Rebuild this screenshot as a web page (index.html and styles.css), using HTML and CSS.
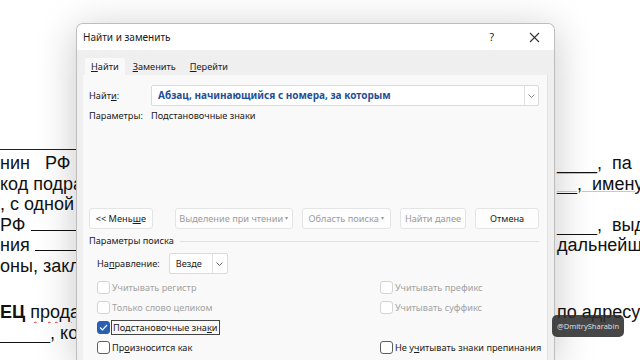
FILE: index.html
```html
<!DOCTYPE html>
<html lang="ru">
<head>
  <meta charset="UTF-8" />
  <title>Найти и заменить</title>
  <link rel="stylesheet" href="styles.css">
</head>
<body>
  <!-- Документ на заднем плане -->
  <div class="doc">
    <div class="doc-rule"></div>
    <div class="doc-line"><span class="l wide">нин РФ</span><span class="r">____,&nbsp; па</span></div>
    <div class="doc-line"><span class="l">код подразделения</span><span class="r link">__,&nbsp; имену</span></div>
    <div class="doc-line"><span class="l">, с одной</span><span class="r"></span></div>
    <div class="doc-line"><span class="l">РФ <u class="blank"></u></span><span class="r">____,&nbsp; выд</span></div>
    <div class="doc-line"><span class="l">ния <u class="blank"></u></span><span class="r">дальнейш</span></div>
    <div class="doc-line"><span class="l">оны, заключили</span><span class="r"></span></div>
    <div class="doc-line gap"><span class="l"><b>ЕЦ</b> <span class="typo">продал</span></span><span class="r">по адресу</span></div>
    <div class="doc-line"><span class="l">_____, ко</span><span class="r"></span></div>
  </div>

  <!-- Диалог -->
  <div class="dialog">
    <div class="titlebar">
      <span class="title">Найти и заменить</span>
      <span class="help">?</span>
      <svg class="close" width="11" height="11" viewBox="0 0 11 11"><path d="M1 1L10 10M10 1L1 10" stroke="#333" stroke-width="1.1" fill="none"/></svg>
    </div>
    <div class="body">
      <div class="tabs">
        <span class="tab active"><u>Н</u>айти</span>
        <span class="tab"><u>З</u>аменить</span>
        <span class="tab"><u>П</u>ерейти</span>
      </div>
      <div class="panel">
        <div class="find-row">
          <span class="label">Найт<u>и</u>:</span>
          <div class="combo">
            <span class="combo-text">Абзац, начинающийся с номера, за которым</span>
            <span class="combo-btn"><svg width="7" height="4" viewBox="0 0 7 4"><path d="M0.5 0.5L3.5 3.5L6.5 0.5" stroke="#888" fill="none"/></svg></span>
          </div>
        </div>
        <div class="param-row">
          <span class="label">Параметры:</span>
          <span>Подстановочные знаки</span>
        </div>

        <div class="buttons">
          <button class="btn less">&lt;&lt; Мень<u>ш</u>е</button>
          <button class="btn wide" disabled>Выделение при чтении <span class="caret">&#9662;</span></button>
          <button class="btn mid" disabled>Область поиска <span class="caret">&#9662;</span></button>
          <button class="btn next" disabled>Найти далее</button>
          <button class="btn cancel">Отмена</button>
        </div>

        <div class="group-title"><span>Параметры поиска</span></div>

        <div class="dir-row">
          <span class="dir-label">На<u>п</u>равление:</span>
          <div class="select">
            <span class="select-text">Везде</span>
            <span class="combo-btn"><svg width="7" height="4" viewBox="0 0 7 4"><path d="M0.5 0.5L3.5 3.5L6.5 0.5" stroke="#666" fill="none"/></svg></span>
          </div>
        </div>

        <div class="checks">
          <label class="check disabled"><span class="box"></span><span>Учитывать регистр</span></label>
          <label class="check disabled"><span class="box"></span><span>Учитывать префикс</span></label>
          <label class="check disabled"><span class="box"></span><span>Только слово целиком</span></label>
          <label class="check disabled"><span class="box"></span><span>Учитывать суффикс</span></label>
          <label class="check"><span class="box checked"><svg width="9" height="7" viewBox="0 0 9 7"><path d="M1 3.5L3.5 6L8 1" stroke="#fff" stroke-width="1.2" fill="none"/></svg></span><span class="focus">Подстановочные зна<u>к</u>и</span></label>
          <span></span>
          <label class="check"><span class="box"></span><span>Пр<u>о</u>износится как</span></label>
          <label class="check"><span class="box"></span><span>Не у<u>ч</u>итывать знаки препинания</span></label>
        </div>
      </div>
    </div>
  </div>

  <div class="watermark">@DmitrySharabin</div>
</body>
</html>
```

FILE: styles.css
```css
* { box-sizing: border-box; }

body {
  margin: 0;
  width: 640px;
  height: 360px;
  overflow: hidden;
  position: relative;
  background: #fff;
  font-family: "Noto Sans", sans-serif;
}

/* документ */
.doc {
  padding-top: 149px;
  font-family: "Liberation Sans", Arial, sans-serif;
  font-size: 18px;
  color: #111;
}

.doc-rule {
  width: 90px;
  border-top: 1px solid #222;
  margin-bottom: 3px;
}

.doc-line {
  display: grid;
  grid-template-columns: 556px 84px;
  height: 20.5px;
  line-height: 20.5px;
  white-space: nowrap;
}

.doc-line.gap { margin-top: 26px; }

.doc-line .l,
.doc-line .r { overflow: hidden; }

.doc-line .l.wide { word-spacing: 10px; }

.doc-line .r { padding-left: 1px; }

.doc-line .link { text-decoration: underline; text-decoration-color: #b9cbe6; }

.blank {
  display: inline-block;
  width: 60px;
  border-bottom: 1.5px solid #111;
  height: 14px;
  text-decoration: none;
}

.typo {
  text-decoration: underline wavy #d33;
  text-underline-offset: 3px;
  text-decoration-thickness: 1px;
}

/* диалог */
.dialog {
  position: absolute;
  left: 76px;
  top: 23px;
  width: 479px;
  height: 337px;
  border: 1px solid #bdbdbd;
  border-bottom: none;
  border-radius: 7px 7px 0 0;
  background: #efefef;
  box-shadow: 0 6px 40px rgba(0, 0, 0, 0.22);
  overflow: hidden;
  font-size: 9.2px;
  color: #1a1a1a;
}

.titlebar {
  height: 26px;
  background: #fff;
  display: flex;
  align-items: center;
  padding-left: 6px;
}

.title {
  font-size: 10px;
  flex: 1;
}

.help {
  font-size: 10.5px;
  margin-right: 35px;
}

.close { margin-right: 14px; }

.body { padding: 8px 6px 0 6px; }

.tabs {
  display: flex;
  height: 17px;
  padding-left: 2px;
}

.tab {
  padding: 0 6px;
  line-height: 17px;
  margin-right: 2px;
}

.tab.active {
  background: #f9f9f9;
  border-radius: 2px 2px 0 0;
}

.panel {
  background: #f9f9f9;
  height: 300px;
  padding: 10px 8px 0 6px;
  border-right: 1px solid #e2e2e2;
}

.label {
  width: 62px;
  flex: none;
}

.find-row {
  display: flex;
  align-items: center;
  height: 21px;
}

.combo {
  flex: 1;
  height: 21px;
  display: flex;
  background: #fff;
  border: 1px solid #dadada;
  border-radius: 2px;
}

.combo-text {
  flex: 1;
  padding-left: 6px;
  line-height: 19px;
  font-weight: bold;
  font-size: 10px;
  color: #1f4f98;
}

.combo-btn {
  width: 14px;
  border-left: 1px solid #e2e2e2;
  display: flex;
  align-items: center;
  justify-content: center;
}

.param-row {
  display: flex;
  margin-top: 3px;
  line-height: 14px;
}

.buttons {
  display: flex;
  margin-top: 85px;
  height: 21px;
}

.btn {
  font: inherit;
  font-size: 9.2px;
  color: #1a1a1a;
  background: #fdfdfd;
  border: 1px solid #e4e4e4;
  border-radius: 3px;
  height: 21px;
  padding: 0;
  margin-right: 9px;
  white-space: nowrap;
}

.btn:disabled { color: #9b9b9b; }

.btn.less { width: 64px; margin-right: 22px; }
.btn.wide { width: 119px; }
.btn.mid { width: 89px; }
.btn.next { width: 67px; }
.btn.cancel { width: 64px; margin-right: 0; }

.caret { font-size: 6px; vertical-align: 2px; }

.group-title {
  display: flex;
  align-items: center;
  margin-top: 5px;
  line-height: 14px;
}

.group-title::after {
  content: "";
  flex: 1;
  border-top: 1px solid #e0e0e0;
  margin-left: 6px;
}

.dir-row {
  display: flex;
  align-items: center;
  margin-top: 5px;
  padding-left: 8px;
  height: 21px;
}

.dir-label { white-space: nowrap; }

.select {
  display: flex;
  width: 59px;
  height: 21px;
  margin-left: 9px;
  background: #fff;
  border: 1px solid #dadada;
  border-radius: 2px;
}

.select-text {
  flex: 1;
  padding-left: 6px;
  line-height: 19px;
}

.select .combo-btn { width: 15px; }

.checks {
  display: grid;
  grid-template-columns: 283px 1fr;
  grid-auto-rows: 20px;
  margin-top: 3px;
  padding-left: 8px;
}

.check {
  display: flex;
  align-items: center;
  white-space: nowrap;
}

.check.disabled { color: #a3a3a3; }

.box {
  flex: none;
  width: 13px;
  height: 13px;
  border: 1px solid #5f5f5f;
  border-radius: 3px;
  background: #fff;
  margin-right: 2px;
  display: flex;
  align-items: center;
  justify-content: center;
}

.check.disabled .box { border-color: #d4d4d4; }

.box.checked {
  background: #2a5fb3;
  border-color: #2a5fb3;
}

.focus {
  border: 1px solid #444;
  padding: 0 1px;
  margin-left: -1px;
  line-height: 13px;
}

/* водяной знак */
.watermark {
  position: absolute;
  left: 552px;
  top: 315px;
  width: 72px;
  height: 22px;
  border-radius: 5px;
  background: rgba(45, 45, 45, 0.88);
  color: #ddd;
  font-size: 7.5px;
  line-height: 22px;
  text-align: center;
}
```
